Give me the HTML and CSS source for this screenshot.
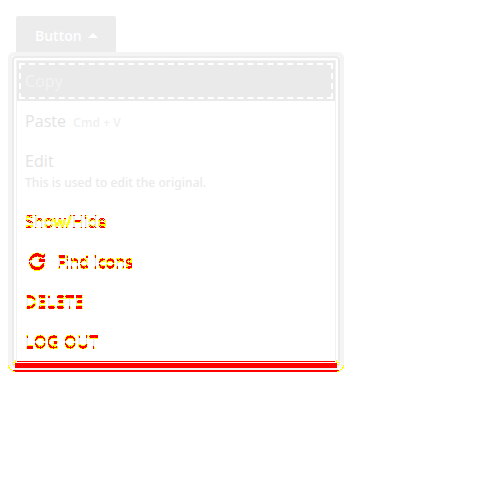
FILE: index.html
```
<!DOCTYPE html>
<html lang="en">
<head>
<meta charset="utf-8">
<title>Menu</title>
<link rel="stylesheet" href="styles.css">
</head>
<body>
<svg class="defs" width="0" height="0" aria-hidden="true">
  <filter id="delta" x="-5%" y="-20%" width="110%" height="140%" color-interpolation-filters="sRGB">
    <feOffset in="SourceGraphic" dy="1" result="moved"/>
    <feComposite in="SourceGraphic" in2="moved" operator="arithmetic" k2="1" k3="-1" result="up"/>
    <feComposite in="moved" in2="SourceGraphic" operator="arithmetic" k2="1" k3="-1" result="down"/>
    <feComposite in="up" in2="down" operator="arithmetic" k2="1" k3="1" result="diff"/>
    <feColorMatrix in="diff" values="0 0 0 0 1  0 0 0 0 1  0 0 0 0 0  0 0 0 60 -8" result="yellow"/>
    <feColorMatrix in="diff" values="0 0 0 0 1  0 0 0 0 0  0 0 0 0 0  0 0 0 60 -32" result="red"/>
    <feColorMatrix in="SourceGraphic" values="0 0 0 0 0  0 0 0 0 0  0 0 0 0 0  0 0 0 .09 0" result="base"/>
    <feMerge><feMergeNode in="base"/><feMergeNode in="yellow"/><feMergeNode in="red"/></feMerge>
  </filter>
  <filter id="delta-wide" x="-5%" y="-20%" width="110%" height="140%" color-interpolation-filters="sRGB">
    <feOffset in="SourceGraphic" dy="2" result="b"/>
    <feOffset in="SourceGraphic" dy="1" result="middle"/>
    <feComposite in="SourceGraphic" in2="b" operator="arithmetic" k2="1" k3="-1" result="up"/>
    <feComposite in="b" in2="SourceGraphic" operator="arithmetic" k2="1" k3="-1" result="down"/>
    <feComposite in="up" in2="down" operator="arithmetic" k2="1" k3="1" result="outer"/>
    <feMorphology in="outer" operator="dilate" radius="0 1" result="spread"/>
    <feComposite in="spread" in2="middle" operator="arithmetic" k1="1" result="core"/>
    <feColorMatrix in="outer" values="0 0 0 0 1  0 0 0 0 1  0 0 0 0 0  0 0 0 60 -8" result="yellow"/>
    <feColorMatrix in="core" values="0 0 0 0 1  0 0 0 0 0  0 0 0 0 0  0 0 0 60 -19" result="red"/>
    <feColorMatrix in="outer" values="0 0 0 0 1  0 0 0 0 0  0 0 0 0 0  0 0 0 60 -52" result="edge"/>
    <feColorMatrix in="middle" values="0 0 0 0 0  0 0 0 0 0  0 0 0 0 0  0 0 0 .09 0" result="base"/>
    <feMerge><feMergeNode in="base"/><feMergeNode in="yellow"/><feMergeNode in="red"/><feMergeNode in="edge"/></feMerge>
  </filter>
</svg>
<button class="button">Button <span class="caret"></span></button>
<div class="panel">
  <ul class="menu">
    <li class="item active">Copy</li>
    <li class="item">Paste <span class="hint">Cmd + V</span></li>
    <li class="item tall">Edit<span class="detail">This is used to edit the original.</span></li>
    <li class="item"><span class="delta">Show/Hide</span></li>
    <li class="item"><span class="delta wide"><svg class="icon" viewBox="0 0 24 24"><path d="M17.600 7.300A7 7 0 1 0 18.800 14" fill="none" stroke="#000" stroke-width="2"/><path d="M20 4v7H13z"/></svg>Find Icons</span></li>
    <li class="item"><span class="delta wide caps">DELETE</span></li>
    <li class="item"><span class="delta wide caps">LOG OUT</span></li>
  </ul>
  <svg class="base" width="336" height="16" viewBox="0 0 336 16" shape-rendering="crispEdges">
    <path fill="#fff" d="M6 5h324v9H6z"/>
    <path fill="#f1f1f1" d="M6 12h324v2H6z"/>
    <path fill="red" d="M9 5h318v1H9zM7 7h322v5H7zM5 14h326v1H5zM7 15h322v1H7z"/>
    <path fill="#ff0" d="M7 4h1v2H7zM5 6h3v1H5zM5 8h2v1H5zM328 4h1v2h-1zM328 6h3v1h-3zM329 8h2v1h-2zM0 9h1v3H0zM1 11h1v2H1zM2 13h2v1H2zM4 15h3v1H4zM335 9h1v3h-1zM334 11h1v2h-1zM332 13h2v1h-2zM329 15h3v1h-3z"/>
  </svg>
</div>
</body>
</html>
```
FILE: styles.css
```
* { box-sizing: border-box; }
body { margin: 0; padding: 16px 8px; background: #fff; font: 16px/24px "Open Sans", "Noto Sans", sans-serif; letter-spacing: 0.06px; color: #e4e4e4; }
.defs { position: absolute; }
.button { display: flex; align-items: center; gap: 6px; width: 100px; height: 36px; margin: 0 0 0 8px; padding: 4px 0 0 19px; border: 0; border-radius: 2px 2px 0 0; background: #ececec; color: #fff; font: 600 14px/20px "Open Sans", sans-serif; }
.caret { margin-bottom: 1px; border: 5px solid transparent; border-top: 0; border-bottom-color: #fff; }
.panel { position: relative; width: 336px; height: 320px; border: 4px solid #f4f4f4; border-bottom: 0; border-radius: 6px; }
.menu { height: 312px; margin: 0; padding: 2px; list-style: none; border: 2px solid #ebebeb; border-radius: 4px; }
.item { height: 40px; padding: 8px; border: 0 solid #f2f2f2; border-width: 0 1px; white-space: nowrap; }
.active { position: relative; height: 41px; border-top-width: 1px; background: #eaeaea; color: #f3f3f3; }
.active::after { content: ""; position: absolute; inset: 2px; border: 2px dashed #fff; }
.tall { height: 60px; }
.hint { margin-left: 3px; font: 500 12px/20px "Noto Sans", sans-serif; color: #efefef; }
.detail { display: block; font: 500 12px/20px "Noto Sans", sans-serif; color: #eaeaea; }
.delta { display: inline-flex; align-items: center; color: #000; filter: url(#delta); }
.wide { filter: url(#delta-wide); }
.caps { font-weight: 500; letter-spacing: 0.6px; }
.icon { width: 24px; height: 24px; margin-right: 8px; }
.base { position: absolute; left: -4px; bottom: 0; display: block; }
```
